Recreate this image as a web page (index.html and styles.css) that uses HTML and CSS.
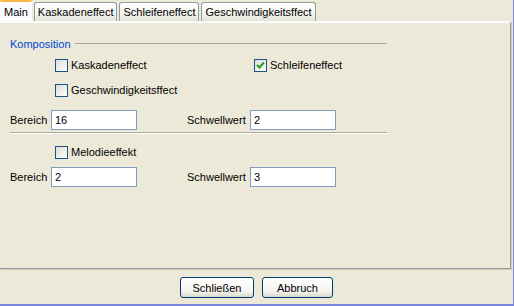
FILE: index.html
```html
<!DOCTYPE html>
<html lang="de">
<head>
    <meta charset="UTF-8">
    <title>Effekte</title>
    <link rel="stylesheet" href="styles.css">
</head>
<body>
    <div class="window">
        <div class="tabs">
            <div class="tab active">Main</div>
            <div class="tab">Kaskadeneffect</div>
            <div class="tab">Schleifeneffect</div>
            <div class="tab">Geschwindigkeitsffect</div>
        </div>

        <div class="panel">
            <div class="group">
                <div class="legend">
                    <span>Komposition</span>
                    <div class="legend-line"></div>
                </div>

                <div class="check-row first">
                    <span></span>
                    <label class="check"><span class="box"></span>Kaskadeneffect</label>
                    <label class="check"><span class="box checked">
                        <svg width="9" height="9" viewBox="0 0 9 9"><path d="M1 4 L3.5 6.5 L8 1.5" fill="none" stroke="#21a121" stroke-width="2"/></svg>
                    </span>Schleifeneffect</label>
                </div>

                <div class="check-row second">
                    <span></span>
                    <label class="check"><span class="box"></span>Geschwindigkeitsffect</label>
                </div>

                <div class="field-row first-fields">
                    <span>Bereich</span>
                    <div class="input">16</div>
                    <span></span>
                    <span>Schwellwert</span>
                    <div class="input">2</div>
                </div>

                <div class="separator"></div>

                <div class="check-row third">
                    <span></span>
                    <label class="check"><span class="box"></span>Melodieeffekt</label>
                </div>

                <div class="field-row second-fields">
                    <span>Bereich</span>
                    <div class="input">2</div>
                    <span></span>
                    <span>Schwellwert</span>
                    <div class="input">3</div>
                </div>
            </div>
        </div>

        <div class="footer">
            <button>Schließen</button>
            <button>Abbruch</button>
        </div>
    </div>
</body>
</html>
```

FILE: styles.css
```css
body {
    margin: 0;
    font-family: "Liberation Sans", Arial, sans-serif;
    font-size: 11px;
    color: #000;
    background: #ece9d8;
}

.window {
    width: 514px;
    height: 306px;
    box-sizing: border-box;
    border-right: 1px solid #7b86dc;
    border-bottom: 2px solid #7b86dc;
    background: #ece9d8;
}

/* tab strip */
.tabs {
    display: flex;
    align-items: flex-end;
    gap: 2px;
    height: 21px;
}

.tab {
    height: 19px;
    line-height: 18px;
    padding: 0 3px;
    box-sizing: border-box;
    border: 1px solid #919b9c;
    border-bottom: none;
    border-radius: 3px 3px 0 0;
    background: linear-gradient(#ffffff, #f3f3ef 60%, #e4e2d6);
}

.tab.active {
    height: 23px;
    margin-bottom: -2px;
    padding: 0 4px;
    border: none;
    border-top: 2px solid #f5b944;
    border-radius: 2px 2px 0 0;
    background: #fcfcfe;
    position: relative;
    z-index: 1;
    line-height: 20px;
}

/* tab page */
.panel {
    height: 248px;
    margin-right: 2px;
    box-sizing: border-box;
    border-top: 2px solid #fcfcfe;
    border-right: 1px solid #919b9c;
    border-bottom: 1px solid #919b9c;
    box-shadow: 1px 1px 0 #d0cebf;
    padding: 14px 0 0 10px;
}

.group {
    width: 377px;
}

.legend {
    display: flex;
    align-items: center;
    height: 13px;
    color: #0046d5;
}

.legend-line {
    flex: 1;
    height: 1px;
    margin-left: 4px;
    background: #aca899;
}

.check-row {
    display: grid;
    grid-template-columns: 45px 199px auto;
    height: 13px;
}

.check-row.first { margin-top: 9px; }
.check-row.second { margin-top: 12px; }
.check-row.third { margin-top: 12px; }

.check {
    display: flex;
    align-items: center;
    gap: 3px;
    line-height: 13px;
}

.box {
    width: 13px;
    height: 13px;
    box-sizing: border-box;
    border: 1px solid #1c5180;
    background: linear-gradient(135deg, #dcdbd5, #ffffff);
    display: flex;
    align-items: center;
    justify-content: center;
}

.field-row {
    display: grid;
    grid-template-columns: 41px 86px 50px 63px 86px;
    align-items: center;
    height: 20px;
}

.first-fields { margin-top: 13px; }
.second-fields { margin-top: 8px; }

.input {
    height: 20px;
    box-sizing: border-box;
    border: 1px solid #7f9db9;
    background: #fff;
    padding-left: 3px;
    line-height: 18px;
}

.separator {
    height: 1px;
    margin-top: 2px;
    background: #aca899;
    border-bottom: 1px solid #fff;
}

/* buttons */
.footer {
    display: flex;
    justify-content: center;
    gap: 8px;
    padding-top: 8px;
}

button {
    width: 74px;
    height: 21px;
    padding: 0;
    font-family: "Liberation Sans", Arial, sans-serif;
    font-size: 11px;
    color: #000;
    border: 1px solid #003c74;
    border-radius: 3px;
    background: linear-gradient(#ffffff, #f4f3ee 70%, #dcd9cc);
}

button + button {
    width: 71px;
}
```
